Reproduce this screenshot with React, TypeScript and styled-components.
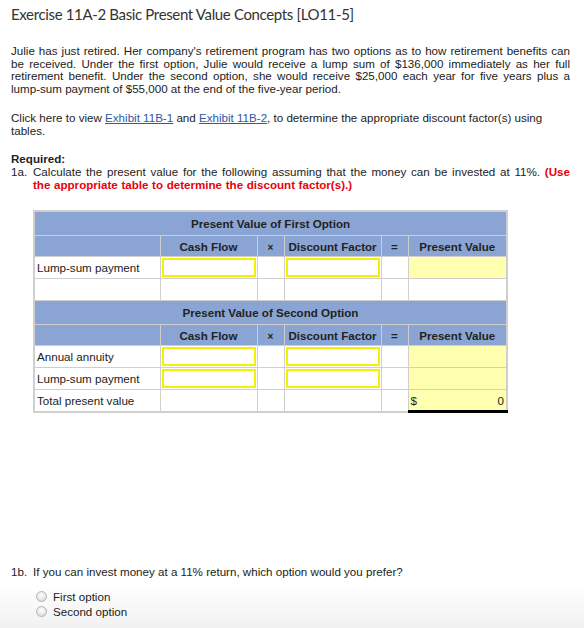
import React from "react";
import styled, { createGlobalStyle } from "styled-components";

const GlobalStyle = createGlobalStyle`
  html, body {
    margin: 0;
    padding: 0;
    background: #fff;
  }
  body {
    font-family: "Liberation Sans", Arial, sans-serif;
    font-size: 11.6px;
    color: #222;
  }
`;

const Page = styled.div`
  width: 584px;
  min-height: 628px;
  box-sizing: border-box;
  padding: 5px 14px 0 11px;
  background: linear-gradient(to bottom, #fff 0, #fff 585px, #f1f1f1 628px);
`;

const Title = styled.h1`
  margin: 0;
  font-family: Lato, "Open Sans", sans-serif;
  font-weight: 400;
  font-size: 15px;
  line-height: 18px;
  color: #333;
  letter-spacing: -0.35px;
`;

const Para = styled.p<{ $top?: number; $justify?: boolean }>`
  margin: ${(p) => p.$top ?? 0}px 0 0;
  line-height: ${(p) => (p.$justify ? "12.5px" : "13px")};
  text-align: ${(p) => (p.$justify ? "justify" : "left")};
`;

const NoWrap = styled.span`
  white-space: nowrap;
`;

const A = styled.a`
  color: #2a5aa8;
  text-decoration: underline;
`;

const Required = styled.div`
  margin-top: 15px;
  font-weight: bold;
  line-height: 13px;
`;

const Item = styled.div`
  display: flex;
  line-height: 13px;
`;

const Num = styled.span`
  width: 22px;
  flex: none;
`;

const ItemText = styled.span`
  text-align: justify;
  word-spacing: 0.4px;
`;

const Red = styled.span`
  color: #e8000b;
  font-weight: bold;
`;

const Table = styled.table`
  margin: 19px 0 0 22px;
  border-collapse: collapse;
  width: 473px;
  table-layout: fixed;
  border: 2px solid #cfcfcf;
`;

const Cell = styled.td`
  border: 1px solid #cfcfcf;
  height: 22px;
  padding: 0 2px;
  box-sizing: border-box;
  vertical-align: middle;
`;

const Banner = styled.td`
  background: #8aa5d3;
  height: 21px;
  text-align: center;
  font-weight: bold;
  border-bottom: 1px solid #cfcfcf;
`;

const Head = styled(Cell)`
  background: #8aa5d3;
  text-align: center;
  font-weight: bold;
  height: 21px;
`;

const Op = styled.span`
  font-size: 10px;
`;

const InputCell = styled(Cell)`
  padding: 1px;
`;

const InputBox = styled.div`
  height: 19px;
  border: 2px solid #f5f000;
  box-sizing: border-box;
  background: #fff;
`;

const PvCell = styled(Cell)<{ $total?: boolean }>`
  background: #ffffb0;
  ${(p) =>
    p.$total &&
    `border-top: 1px solid #000; border-bottom: 3px solid #000;`}
`;

const Total = styled.div`
  display: flex;
  justify-content: space-between;
`;

const Question = styled(Item)`
  margin-top: 152px;
`;

const Options = styled.div`
  margin: 12px 0 0 25px;
  display: flex;
  flex-direction: column;
  gap: 2px;
`;

const Option = styled.label`
  display: flex;
  align-items: center;
  gap: 6px;
  line-height: 13px;
`;

const Radio = styled.span`
  width: 11px;
  height: 11px;
  border-radius: 50%;
  border: 1px solid #b3b3b3;
  background: radial-gradient(circle at 50% 35%, #fff 0, #e6e6e6 60%, #cfcfcf 100%);
  box-sizing: border-box;
`;

const cols = [126, 97, 27, 97, 27, 99];

function HeaderRow() {
  return (
    <tr>
      <Head />
      <Head>Cash Flow</Head>
      <Head>
        <Op>×</Op>
      </Head>
      <Head>Discount Factor</Head>
      <Head>=</Head>
      <Head>Present Value</Head>
    </tr>
  );
}

function EntryRow({ label }: { label: string }) {
  return (
    <tr>
      <Cell>{label}</Cell>
      <InputCell>
        <InputBox />
      </InputCell>
      <Cell />
      <InputCell>
        <InputBox />
      </InputCell>
      <Cell />
      <PvCell />
    </tr>
  );
}

export default function App() {
  return (
    <>
      <GlobalStyle />
      <Page>
        <Title>Exercise 11A-2 Basic Present Value Concepts [LO11-5]</Title>
        <Para $top={22} $justify>
          Julie has just retired. Her company's retirement program has two options as to how retirement
          benefits can be received. Under the first option, Julie would receive a lump sum of $136,000
          immediately as her full retirement benefit. Under the second option, she would receive $25,000
          each year for five years plus a <NoWrap>lump-sum</NoWrap> payment of $55,000 at the end of the
          five-year period.
        </Para>
        <Para $top={16}>
          Click here to view <A href="#">Exhibit 11B-1</A> and <A href="#">Exhibit 11B-2</A>, to determine
          the appropriate discount factor(s) using tables.
        </Para>
        <Required>Required:</Required>
        <Item>
          <Num>1a.</Num>
          <ItemText>
            Calculate the present value for the following assuming that the money can be invested at 11%.{" "}
            <Red>(Use the appropriate table to determine the discount factor(s).)</Red>
          </ItemText>
        </Item>
        <Table>
          <colgroup>
            {cols.map((w, i) => (
              <col key={i} style={{ width: w }} />
            ))}
          </colgroup>
          <tbody>
            <tr>
              <Banner colSpan={6}>Present Value of First Option</Banner>
            </tr>
            <HeaderRow />
            <EntryRow label="Lump-sum payment" />
            <tr>
              <Cell />
              <Cell />
              <Cell />
              <Cell />
              <Cell />
              <Cell />
            </tr>
            <tr>
              <Banner colSpan={6}>Present Value of Second Option</Banner>
            </tr>
            <HeaderRow />
            <EntryRow label="Annual annuity" />
            <EntryRow label="Lump-sum payment" />
            <tr>
              <Cell>Total present value</Cell>
              <Cell />
              <Cell />
              <Cell />
              <Cell />
              <PvCell $total>
                <Total>
                  <span>$</span>
                  <span>0</span>
                </Total>
              </PvCell>
            </tr>
          </tbody>
        </Table>
        <Question>
          <Num>1b.</Num>
          <span>If you can invest money at a 11% return, which option would you prefer?</span>
        </Question>
        <Options>
          <Option>
            <Radio />
            First option
          </Option>
          <Option>
            <Radio />
            Second option
          </Option>
        </Options>
      </Page>
    </>
  );
}
